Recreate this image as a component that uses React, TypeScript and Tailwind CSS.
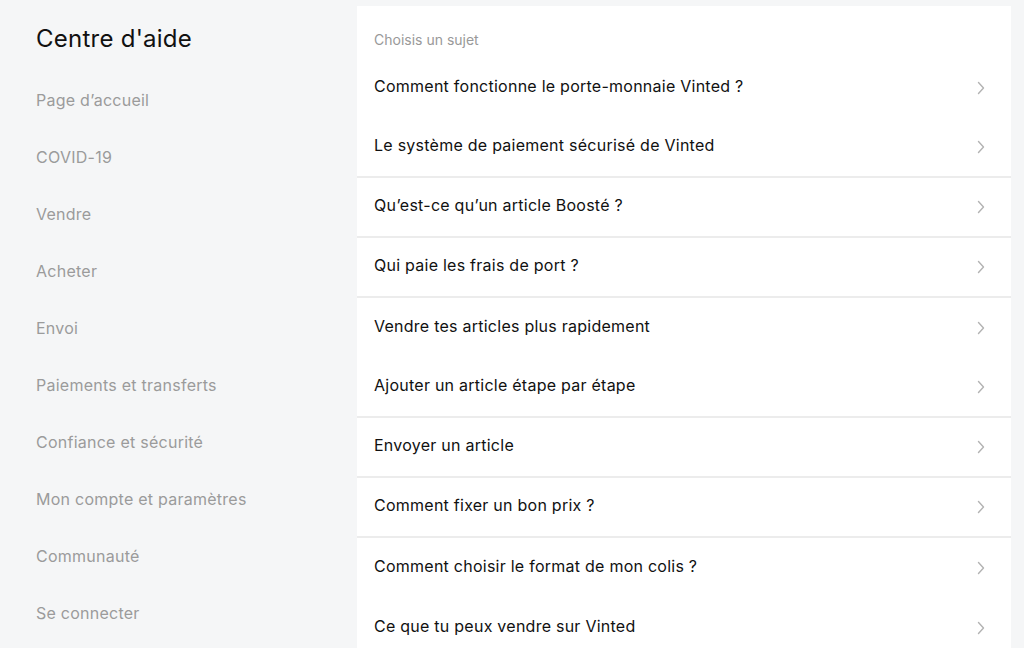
import React from "react";

const navItems = [
  "Page d’accueil",
  "COVID-19",
  "Vendre",
  "Acheter",
  "Envoi",
  "Paiements et transferts",
  "Confiance et sécurité",
  "Mon compte et paramètres",
  "Communauté",
  "Se connecter",
];

interface Topic {
  title: string;
  divider: boolean;
}

const topics: Topic[] = [
  { title: "Comment fonctionne le porte-monnaie Vinted ?", divider: false },
  { title: "Le système de paiement sécurisé de Vinted", divider: true },
  { title: "Qu’est-ce qu’un article Boosté ?", divider: true },
  { title: "Qui paie les frais de port ?", divider: true },
  { title: "Vendre tes articles plus rapidement", divider: false },
  { title: "Ajouter un article étape par étape", divider: true },
  { title: "Envoyer un article", divider: true },
  { title: "Comment fixer un bon prix ?", divider: true },
  { title: "Comment choisir le format de mon colis ?", divider: false },
  { title: "Ce que tu peux vendre sur Vinted", divider: false },
];

const Chevron = () => (
  <svg width="8" height="14" viewBox="0 0 8 14" fill="none">
    <path
      d="M1.5 1.5L6.5 7L1.5 12.5"
      stroke="#b3b3b3"
      strokeWidth="1.4"
      strokeLinecap="round"
      strokeLinejoin="round"
    />
  </svg>
);

export default function App() {
  return (
    <div
      className="flex w-[1024px] h-[648px] overflow-hidden bg-[#f5f6f7]"
      style={{ fontFamily: "Inter, 'Noto Sans', sans-serif" }}
    >
      {/* Sidebar */}
      <aside className="w-[357px] shrink-0 pl-[36px] pt-[23px]">
        <h1 className="text-[24px] leading-[32px] text-[#111111] tracking-[0.25px]">
          Centre d'aide
        </h1>
        <nav className="mt-[29px] flex flex-col">
          {navItems.map((label) => (
            <div
              key={label}
              className="h-[57px] flex items-start pt-[4px] text-[16px] leading-[24px] text-[#9b9b9b] tracking-[0.25px]"
            >
              {label}
            </div>
          ))}
        </nav>
      </aside>

      {/* Topics panel */}
      <main className="mt-[6px] w-[654px] bg-white self-start">
        <div className="pl-[17px] pt-[24px] pb-[8px] text-[14px] leading-[20px] text-[#999999]">
          Choisis un sujet
        </div>
        {topics.map((t) => (
          <div
            key={t.title}
            className={`h-[60px] flex items-center justify-between pl-[17px] pr-[26px] ${
              t.divider ? "border-b-2 border-[#ececec]" : ""
            }`}
          >
            <span className="text-[16px] leading-[24px] text-[#111111] tracking-[0.25px] -mt-[5px]">
              {t.title}
            </span>
            <Chevron />
          </div>
        ))}
      </main>
    </div>
  );
}
